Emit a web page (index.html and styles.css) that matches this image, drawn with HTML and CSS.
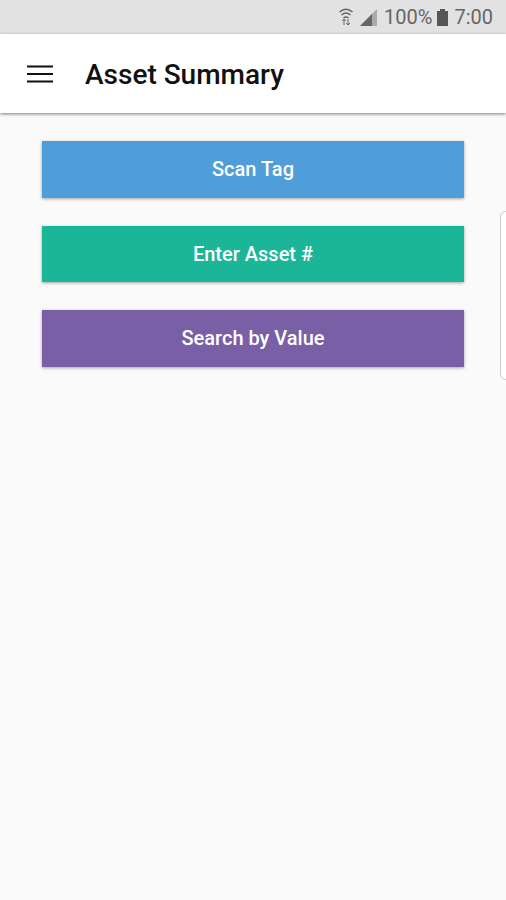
FILE: index.html
```html
<!DOCTYPE html>
<html lang="en">
<head>
<meta charset="utf-8">
<title>Asset Summary</title>
<link rel="stylesheet" href="styles.css">
</head>
<body>
<div class="status">
  <svg class="wifi" width="16" height="20" viewBox="0 0 16 20" fill="none" stroke="#666" stroke-width="1.6"><path d="M1.5 5Q8-.5 14.500 5M3.500 8Q8 4 12.500 8M5.500 11Q8 9 10.500 11"/><path d="M6 18v-6M4 14l2-2 2 2M10 12v6M8.500 16l1.500 2 2-2" stroke-width="1"/></svg>
  <svg class="signal" width="17" height="17" viewBox="0 0 17 17"><path d="M0 17L17 0v17z" fill="#aaa"/><path d="M0 17L12 5v12z" fill="#666"/></svg>
  <span class="percent">100%</span>
  <svg class="battery" width="11" height="17" viewBox="0 0 11 17"><path d="M3 0h5v2h3v15H0V2h3z" fill="#555"/></svg>
  <span class="clock">7:00</span>
</div>
<header class="bar">
  <svg class="menu" width="26" height="18" viewBox="0 0 26 18"><path d="M0 1.500h26M0 9h26M0 16.500h26" stroke="#111" stroke-width="2"/></svg>
  <h1 class="title"><span>Asset Summary</span></h1>
</header>
<main class="actions">
  <button class="action scan"><span>Scan Tag</span></button>
  <button class="action enter"><span>Enter Asset #</span></button>
  <button class="action search"><span>Search by Value</span></button>
</main>
<div class="edge"></div>
</body>
</html>
```
FILE: styles.css
```css
* { box-sizing: border-box; }
body { margin: 0; height: 900px; overflow: hidden; background: #fafafa; font-family: Roboto, sans-serif; position: relative; }
.status { height: 34px; background: #e2e2e2; display: flex; align-items: center; justify-content: flex-end; padding-right: 13px; color: #666; font-size: 20px; }
.signal { margin-left: 6px; }
.percent { margin-left: 7px; }
.battery { margin-left: 5px; }
.clock { margin-left: 6px; }
.bar { height: 79px; background: #fff; display: flex; align-items: center; padding-left: 27px; box-shadow: 0 1px 3px rgba(0,0,0,.5); }
.title { margin: 2px 0 0 32px; font-size: 28px; font-weight: 500; color: #111; white-space: nowrap; }
.actions { display: flex; flex-direction: column; gap: 28px; padding: 28px 42px; }
.action { height: 56.500px; border: 0; color: #fff; font: 500 20px Roboto, sans-serif; box-shadow: 0 1px 3px rgba(0,0,0,.35); }
.scan { background: #4f9dd9; }
.enter { background: #1bb698; }
.search { background: #785fa6; }
.edge { position: absolute; left: 500px; top: 211px; width: 12px; height: 169px; border: 1px solid #ccc; border-radius: 6px; background: #fff; }
```
